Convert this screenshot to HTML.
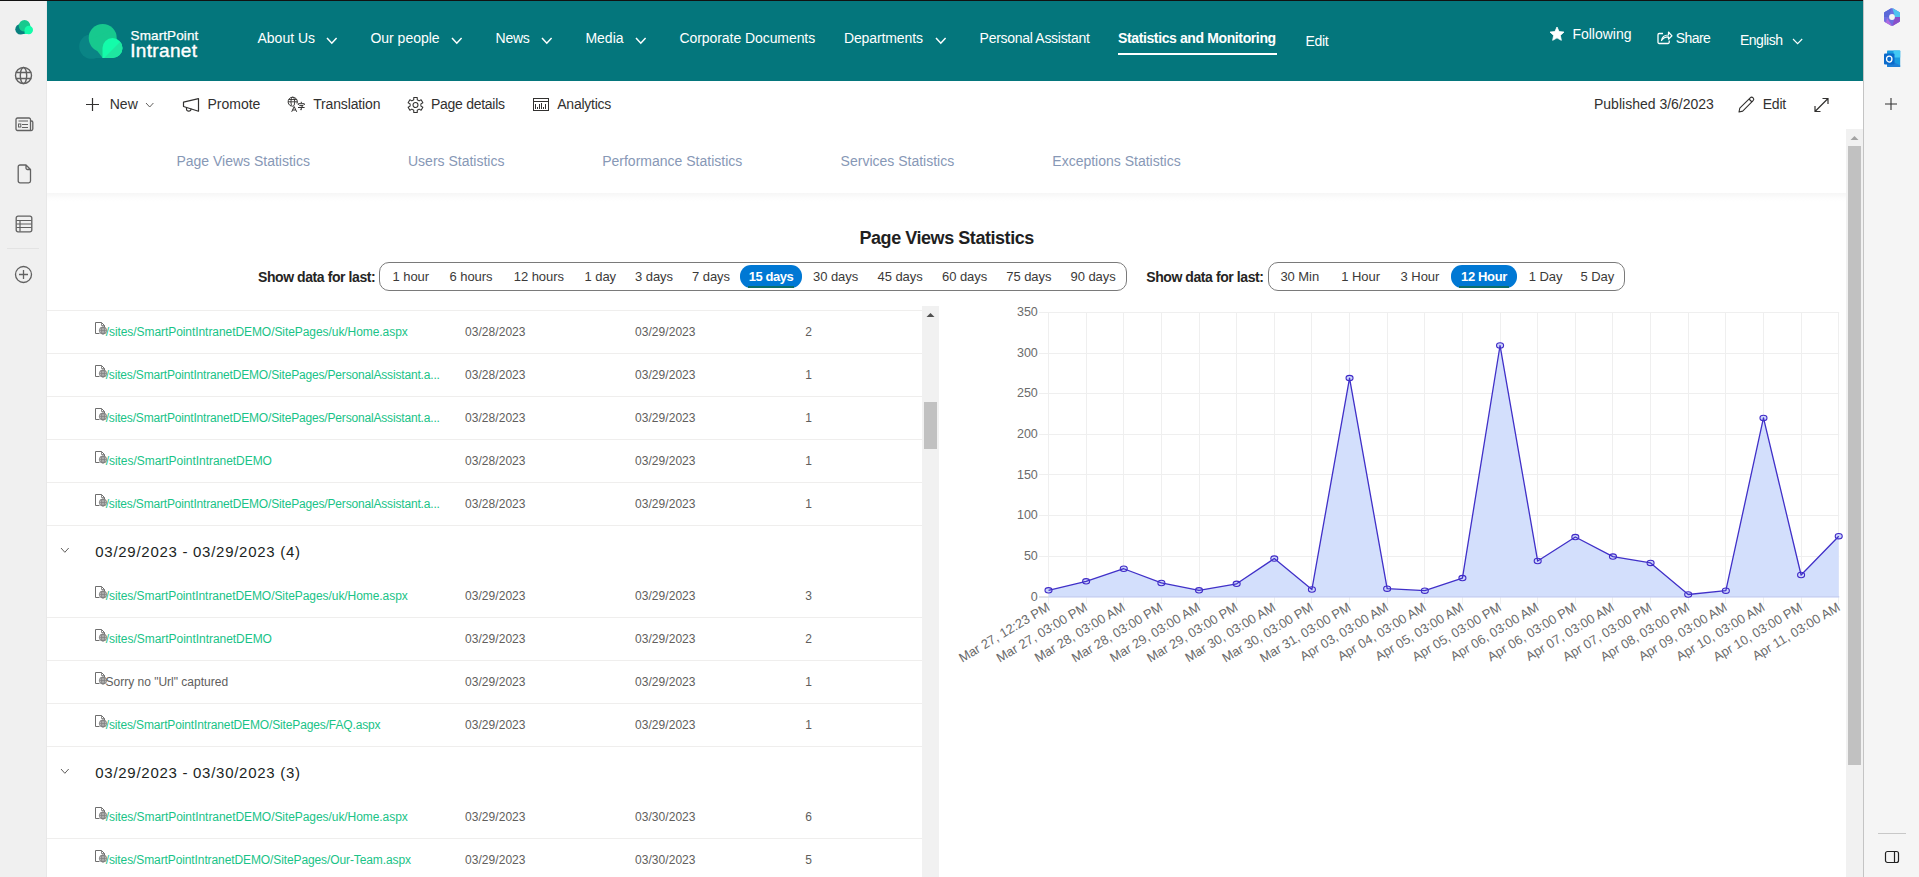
<!DOCTYPE html>
<html><head><meta charset="utf-8"><style>
*{box-sizing:border-box}
html,body{margin:0;padding:0}
body{width:1919px;height:877px;overflow:hidden;position:relative;background:#fff;font-family:"Liberation Sans",sans-serif;color:#323130}
.abs{position:absolute}
.t{position:absolute;white-space:nowrap;line-height:1}
.ic{position:absolute;overflow:visible}
</style></head><body>
<div class="abs" style="left:0;top:0;width:1863px;height:1px;background:#111"></div>
<div class="abs" style="left:0;top:1px;width:47px;height:876px;background:#f0f0f0;border-right:1px solid #e8e8e8"></div>
<div class="abs" style="left:1863px;top:0;width:56px;height:877px;background:#f5f5f5;border-left:1px solid #c4c4c4"></div>
<div class="abs" style="left:47px;top:1px;width:1816px;height:80px;background:#04767c"></div>
<div class="abs" style="left:47px;top:193px;width:1799px;height:9px;background:linear-gradient(#f6f6f6,#fdfdfd 60%,#fff)"></div>
<svg class="ic" style="left:75px;top:20px" width="52" height="42" viewBox="75 20 52 42">
<defs><clipPath id="lc2"><circle cx="112.5" cy="48" r="10"/><rect x="102.5" y="48" width="10" height="10"/></clipPath></defs>
<circle cx="91.5" cy="46.5" r="12.3" fill="#0a8485"/>
<rect x="91" y="40" width="20" height="18" fill="#0a8485"/>
<circle cx="102.7" cy="38" r="14" fill="#17c98e"/>
<path d="M88.8 40 L102.7 58 L112 58 L112 30 Z" fill="#17c98e"/>
<g clip-path="url(#lc2)"><rect x="100" y="36" width="25" height="24" fill="#14fcaa"/>
<path d="M124 38 L103 59 L124 59 Z" fill="#1ee6a0"/></g>
</svg>
<div class="t" style="left:130.60px;top:29.47px;font-size:13.5px;color:#fff;letter-spacing:0.1px;-webkit-text-stroke:0.25px #fff;">SmartPoint</div>
<div class="t" style="left:130.20px;top:40.92px;font-size:19px;color:#fff;letter-spacing:0.35px;-webkit-text-stroke:0.4px #fff;">Intranet</div>
<div class="t" style="left:257.50px;top:31.15px;font-size:14px;color:#fff;">About Us</div>
<div class="t" style="left:370.40px;top:31.15px;font-size:14px;color:#fff;">Our people</div>
<div class="t" style="left:495.60px;top:31.15px;font-size:14px;color:#fff;letter-spacing:-0.3px;">News</div>
<div class="t" style="left:585.40px;top:31.15px;font-size:14px;color:#fff;">Media</div>
<div class="t" style="left:679.50px;top:31.15px;font-size:14px;color:#fff;letter-spacing:-0.07px;">Corporate Documents</div>
<div class="t" style="left:843.90px;top:31.15px;font-size:14px;color:#fff;letter-spacing:-0.1px;">Departments</div>
<div class="t" style="left:979.60px;top:31.15px;font-size:14px;color:#fff;letter-spacing:-0.29px;">Personal Assistant</div>
<div class="t" style="left:1118.00px;top:31.15px;font-size:14px;color:#fff;font-weight:bold;letter-spacing:-0.38px;">Statistics and Monitoring</div>
<div class="abs" style="left:1118px;top:53px;width:159px;height:2px;background:#fff"></div>
<div class="t" style="left:1305.60px;top:33.75px;font-size:14px;color:#fff;letter-spacing:-0.4px;">Edit</div>
<svg class="ic" style="left:324.60px;top:35.50px" width="13.60" height="9.20"><polyline points="2,2 6.80,7.20 11.60,2" fill="none" stroke="#fff" stroke-width="1.5"/></svg>
<svg class="ic" style="left:450.00px;top:35.50px" width="13.60" height="9.20"><polyline points="2,2 6.80,7.20 11.60,2" fill="none" stroke="#fff" stroke-width="1.5"/></svg>
<svg class="ic" style="left:539.50px;top:35.50px" width="13.60" height="9.20"><polyline points="2,2 6.80,7.20 11.60,2" fill="none" stroke="#fff" stroke-width="1.5"/></svg>
<svg class="ic" style="left:633.60px;top:35.50px" width="13.60" height="9.20"><polyline points="2,2 6.80,7.20 11.60,2" fill="none" stroke="#fff" stroke-width="1.5"/></svg>
<svg class="ic" style="left:933.50px;top:35.50px" width="13.60" height="9.20"><polyline points="2,2 6.80,7.20 11.60,2" fill="none" stroke="#fff" stroke-width="1.5"/></svg>
<svg class="ic" style="left:1549px;top:26px" width="16" height="16" viewBox="0 0 24 24"><path d="M12 1.5 L15.1 8.3 L22.5 9.1 L17 14.1 L18.5 21.5 L12 17.8 L5.5 21.5 L7 14.1 L1.5 9.1 L8.9 8.3 Z" fill="#fff" stroke="#fff" stroke-width="1.2" stroke-linejoin="round"/></svg>
<div class="t" style="left:1572.40px;top:27.15px;font-size:14px;color:#fff;">Following</div>
<svg class="ic" style="left:1657px;top:30px" width="16" height="15" viewBox="0 0 16 15"><path d="M6 3.5 H2.2 a1.2 1.2 0 0 0 -1.2 1.2 V12.3 a1.2 1.2 0 0 0 1.2 1.2 H11 a1.2 1.2 0 0 0 1.2-1.2 V10.5" fill="none" stroke="#fff" stroke-width="1.3"/><path d="M4.5 10.5 C5 6.5 8 5 11.5 5 V2 L15 5.8 L11.5 9.2 V6.8 C8.5 6.8 6 8 4.5 10.5Z" fill="none" stroke="#fff" stroke-width="1.2" stroke-linejoin="round"/></svg>
<div class="t" style="left:1675.70px;top:30.75px;font-size:14px;color:#fff;letter-spacing:-0.55px;">Share</div>
<div class="t" style="left:1739.90px;top:32.95px;font-size:14px;color:#fff;letter-spacing:-0.45px;">English</div>
<svg class="ic" style="left:1790.70px;top:36.80px" width="13.20" height="8.70"><polyline points="2,2 6.60,6.70 11.20,2" fill="none" stroke="#fff" stroke-width="1.1"/></svg>
<svg class="ic" style="left:85px;top:97px" width="15" height="15"><path d="M7.5 1 V14 M1 7.5 H14" stroke="#323130" stroke-width="1.2"/></svg>
<div class="t" style="left:109.75px;top:97.15px;font-size:14px;color:#323130;">New</div>
<svg class="ic" style="left:144.20px;top:101.00px" width="11.40" height="8.00"><polyline points="2,2 5.70,6.00 9.40,2" fill="none" stroke="#605e5c" stroke-width="1.0"/></svg>
<svg class="ic" style="left:181px;top:96px" width="20" height="18" viewBox="0 0 20 18"><path d="M2.5 6.1 L17.5 2.6 V15.2 L2.5 10.5 Z" fill="none" stroke="#323130" stroke-width="1.2" stroke-linejoin="round"/><path d="M5.5 11.3 V13 C5.5 15.8 9.8 16 10.2 12.7" fill="none" stroke="#323130" stroke-width="1.2"/></svg>
<div class="t" style="left:207.50px;top:97.15px;font-size:14px;color:#323130;">Promote</div>
<svg class="ic" style="left:287px;top:96px" width="19" height="17" viewBox="0 0 19 17">
<path d="M10 7.5 A4.6 4.6 0 1 0 4.5 10.2" fill="none" stroke="#323130" stroke-width="1"/><ellipse cx="5.8" cy="5.8" rx="1.9" ry="4.6" fill="none" stroke="#323130" stroke-width="0.9"/><path d="M1.2 5.8 H10.4 M1.8 3.5 H9.8" stroke="#323130" stroke-width="0.9" fill="none"/>
<path d="M4.7 15.8 L7.2 10.6 L9.7 15.8 M5.7 14 H8.7" fill="none" stroke="#323130" stroke-width="1"/>
<path d="M14.3 5.8 V7.2 M11.3 9 V7.7 H17.3 V9 M12.3 9.6 H16.2 L14.3 11 V13.8 L13.3 13.6 M11 11.5 H17.6" fill="none" stroke="#323130" stroke-width="1"/></svg>
<div class="t" style="left:313.20px;top:97.15px;font-size:14px;color:#323130;letter-spacing:-0.15px;">Translation</div>
<svg class="ic" style="left:405.5px;top:96px" width="19" height="18" viewBox="0 0 19 18"><path d="M7.75 3.79 L7.75 1.50 L11.25 1.50 L11.25 3.79 L13.14 4.88 L15.12 3.74 L16.87 6.77 L14.89 7.91 L14.89 10.09 L16.87 11.23 L15.12 14.26 L13.14 13.12 L11.25 14.21 L11.25 16.50 L7.75 16.50 L7.75 14.21 L5.86 13.12 L3.88 14.26 L2.13 11.23 L4.11 10.09 L4.11 7.91 L2.13 6.77 L3.88 3.74 L5.86 4.88 Z" fill="none" stroke="#323130" stroke-width="1.05" stroke-linejoin="round"/><circle cx="9.5" cy="9" r="2.5" fill="none" stroke="#323130" stroke-width="1.05"/></svg>
<div class="t" style="left:431.00px;top:97.15px;font-size:14px;color:#323130;letter-spacing:-0.28px;">Page details</div>
<svg class="ic" style="left:533px;top:98px" width="16" height="13" viewBox="0 0 16 13" shape-rendering="crispEdges"><rect x="0.5" y="0.5" width="15" height="12" fill="none" stroke="#323130" stroke-width="1"/><path d="M0.5 3.5 H15.5" stroke="#323130" stroke-width="1"/><path d="M2.5 6 V11 M4.5 9 V11 M6.5 6 V11 M8.5 5 V11 M10.5 8.5 V11 M12.5 6 V11" stroke="#323130" stroke-width="1"/></svg>
<div class="t" style="left:557.30px;top:97.15px;font-size:14px;color:#323130;letter-spacing:-0.26px;">Analytics</div>
<div class="t" style="left:1594.00px;top:97.15px;font-size:14px;color:#323130;">Published 3/6/2023</div>
<svg class="ic" style="left:1737px;top:96px" width="18" height="18" viewBox="0 0 18 18"><path d="M2 16 L2.8 12.2 L13.2 1.8 a1.9 1.9 0 0 1 2.9 2.9 L5.7 15.1 Z M12 3 L15 6" fill="none" stroke="#323130" stroke-width="1.1" stroke-linejoin="round"/></svg>
<div class="t" style="left:1762.70px;top:97.15px;font-size:14px;color:#323130;letter-spacing:-0.2px;">Edit</div>
<svg class="ic" style="left:1813px;top:97px" width="17" height="16" viewBox="0 0 17 16"><path d="M2 14.5 L15 1.5 M9.5 1.5 H15 V7 M2 9 V14.5 H7.5" fill="none" stroke="#323130" stroke-width="1.2"/></svg>
<div class="t" style="left:176.40px;top:154.25px;font-size:14px;color:#8798b6;">Page Views Statistics</div>
<div class="t" style="left:408.00px;top:154.25px;font-size:14px;color:#8798b6;">Users Statistics</div>
<div class="t" style="left:602.20px;top:154.25px;font-size:14px;color:#8798b6;">Performance Statistics</div>
<div class="t" style="left:840.60px;top:154.25px;font-size:14px;color:#8798b6;">Services Statistics</div>
<div class="t" style="left:1052.30px;top:154.25px;font-size:14px;color:#8798b6;">Exceptions Statistics</div>
<svg class="ic" style="left:14px;top:19px" width="20" height="16" viewBox="14 19 20 16">
<circle cx="20.5" cy="29.3" r="5.2" fill="#08807f"/><rect x="20" y="27" width="8" height="7" fill="#08807f"/>
<circle cx="24.5" cy="25.8" r="5.8" fill="#17c98e"/>
<circle cx="28.8" cy="30" r="4.2" fill="#14fcaa"/><rect x="24.6" y="30" width="4.5" height="4" fill="#14fcaa"/>
</svg>
<svg class="ic" style="left:14px;top:66px" width="19" height="19" viewBox="0 0 19 19"><circle cx="9.5" cy="9.5" r="8" fill="none" stroke="#616161" stroke-width="1.4"/><ellipse cx="9.5" cy="9.5" rx="3.2" ry="8" fill="none" stroke="#616161" stroke-width="1.4"/><path d="M1.8 6.5 H17.2 M1.8 12.5 H17.2" stroke="#616161" stroke-width="1.4"/></svg>
<svg class="ic" style="left:15px;top:117px" width="19" height="15" viewBox="0 0 19 15"><path d="M2.5 1 H14 a1.5 1.5 0 0 1 1.5 1.5 V13.5 H2.5 a1.5 1.5 0 0 1 -1.5 -1.5 V2.5 a1.5 1.5 0 0 1 1.5 -1.5Z M15.5 4 H16.5 a1.3 1.3 0 0 1 1.3 1.3 V12 a1.5 1.5 0 0 1 -1.5 1.5 H14" fill="none" stroke="#616161" stroke-width="1.3"/><path d="M3.5 4 H13 M7 7.5 H13 M7 10.5 H13" stroke="#616161" stroke-width="1.2"/><rect x="3.5" y="7" width="2.3" height="3" fill="none" stroke="#616161" stroke-width="1"/></svg>
<svg class="ic" style="left:17px;top:164px" width="15" height="20" viewBox="0 0 15 20"><path d="M3 1 H9 L13.5 5.5 V17 a1.8 1.8 0 0 1 -1.8 1.8 H3 a1.8 1.8 0 0 1 -1.8 -1.8 V2.8 A1.8 1.8 0 0 1 3 1Z M9 1 V4 a1.5 1.5 0 0 0 1.5 1.5 H13.5" fill="none" stroke="#616161" stroke-width="1.3" stroke-linejoin="round"/></svg>
<svg class="ic" style="left:15px;top:215px" width="18" height="18" viewBox="0 0 18 18"><path d="M3 1.2 H15 a1.8 1.8 0 0 1 1.8 1.8 V15 a1.8 1.8 0 0 1 -1.8 1.8 H3 a1.8 1.8 0 0 1 -1.8 -1.8 V3 A1.8 1.8 0 0 1 3 1.2Z" fill="none" stroke="#616161" stroke-width="1.3"/><path d="M1.5 5.5 H16.5 M1.5 9 H16.5 M1.5 12.5 H16.5 M5 5.5 V16.5" stroke="#616161" stroke-width="1.2"/></svg>
<div class="abs" style="left:7px;top:248px;width:32px;height:1px;background:#e3e3e3"></div>
<svg class="ic" style="left:14px;top:265px" width="19" height="19" viewBox="0 0 19 19"><circle cx="9.5" cy="9.5" r="8" fill="none" stroke="#616161" stroke-width="1.3"/><path d="M9.5 5 V14 M5 9.5 H14" stroke="#616161" stroke-width="1.3"/></svg>
<svg class="ic" style="left:1883px;top:7px" width="18" height="20" viewBox="0 0 18 20">
<defs><clipPath id="hx"><path d="M9 1.2 Q9.6 1.1 10.2 1.4 L16.2 4.9 Q17 5.4 17 6.3 V13.7 Q17 14.6 16.2 15.1 L10.2 18.6 Q9 19.2 7.8 18.6 L1.8 15.1 Q1 14.6 1 13.7 V6.3 Q1 5.4 1.8 4.9 L7.8 1.4 Q8.4 1.1 9 1.2Z"/></clipPath></defs>
<g clip-path="url(#hx)">
<rect x="0" y="0" width="18" height="20" fill="#6d6fe0"/>
<path d="M9 0 L18 5 V10 L12 10 Z" fill="#4fc3f0"/>
<path d="M18 10 V20 H9 L12 10Z" fill="#8a4fc9"/>
<path d="M0 13 L9 20 H0Z M4 11 L10 20 H2 Z" fill="#b06be0"/>
<path d="M0 3 L9 0 L6 10 H0Z" fill="#5a68d8"/>
</g>
<circle cx="9" cy="10" r="2.9" fill="#f5f5f5"/></svg>
<svg class="ic" style="left:1884px;top:50px" width="17" height="18" viewBox="0 0 17 18">
<rect x="3" y="0.5" width="13.2" height="16.5" rx="0.8" fill="#1a9be0"/>
<rect x="9.5" y="0.5" width="6.7" height="7" fill="#42c8f4"/>
<path d="M3 8.5 L16.2 15.5 V17 H3.8 a0.8 0.8 0 0 1 -0.8 -0.8Z" fill="#1e7fd6"/>
<rect x="0" y="3.6" width="10.5" height="10.9" rx="1" fill="#0a6acb"/>
<ellipse cx="5.25" cy="9.05" rx="2.7" ry="3" fill="none" stroke="#fff" stroke-width="1.3"/></svg>
<svg class="ic" style="left:1884px;top:97px" width="14" height="14"><path d="M7 1 V13 M1 7 H13" stroke="#333" stroke-width="1.1"/></svg>
<div class="abs" style="left:1878px;top:833px;width:28px;height:1px;background:#c8c8c8"></div>
<svg class="ic" style="left:1884px;top:850px" width="16" height="14" viewBox="0 0 16 14"><rect x="1.5" y="1.5" width="13" height="11" rx="2" fill="none" stroke="#222" stroke-width="1.2"/><path d="M10.5 1.5 V12.5" stroke="#222" stroke-width="1.2"/></svg>
<div class="abs" style="left:1846px;top:129px;width:17px;height:748px;background:#f1f1f1"></div>
<svg class="ic" style="left:1850px;top:135px" width="9" height="6"><path d="M0.5 5 L4.5 1 L8.5 5Z" fill="#a3a3a3"/></svg>
<div class="abs" style="left:1848px;top:146px;width:13px;height:619px;background:#c1c1c1"></div>
<div class="t" style="left:859.50px;top:228.51px;font-size:18px;color:#1f1f1f;font-weight:bold;letter-spacing:-0.45px;">Page Views Statistics</div>
<div class="t" style="left:258.00px;top:270.35px;font-size:14px;color:#252423;font-weight:bold;letter-spacing:-0.42px;">Show data for last:</div>
<div class="t" style="left:1146.25px;top:270.35px;font-size:14px;color:#252423;font-weight:bold;letter-spacing:-0.42px;">Show data for last:</div>
<div class="abs" style="left:379px;top:262px;width:747.5px;height:29px;border:1px solid #7a7a7a;border-radius:10px"></div>
<div class="abs" style="left:740px;top:265px;width:61.5px;height:23px;background:#0078d4;border-radius:11px"></div>
<div class="abs" style="left:747.5px;top:286px;width:46px;height:1.6px;background:#0c6f6a"></div>
<div class="t" style="left:392.50px;top:270.00px;font-size:13px;color:#3b3a39;letter-spacing:-0.05px;">1 hour</div>
<div class="t" style="left:449.50px;top:270.00px;font-size:13px;color:#3b3a39;letter-spacing:-0.05px;">6 hours</div>
<div class="t" style="left:513.75px;top:270.00px;font-size:13px;color:#3b3a39;letter-spacing:-0.05px;">12 hours</div>
<div class="t" style="left:584.50px;top:270.00px;font-size:13px;color:#3b3a39;letter-spacing:-0.05px;">1 day</div>
<div class="t" style="left:635.00px;top:270.00px;font-size:13px;color:#3b3a39;letter-spacing:-0.05px;">3 days</div>
<div class="t" style="left:692.00px;top:270.00px;font-size:13px;color:#3b3a39;letter-spacing:-0.05px;">7 days</div>
<div class="t" style="left:813.00px;top:270.00px;font-size:13px;color:#3b3a39;letter-spacing:-0.05px;">30 days</div>
<div class="t" style="left:877.50px;top:270.00px;font-size:13px;color:#3b3a39;letter-spacing:-0.05px;">45 days</div>
<div class="t" style="left:942.00px;top:270.00px;font-size:13px;color:#3b3a39;letter-spacing:-0.05px;">60 days</div>
<div class="t" style="left:1006.25px;top:270.00px;font-size:13px;color:#3b3a39;letter-spacing:-0.05px;">75 days</div>
<div class="t" style="left:1070.50px;top:270.00px;font-size:13px;color:#3b3a39;letter-spacing:-0.05px;">90 days</div>
<div class="t" style="left:748.75px;top:270.00px;font-size:13px;color:#fff;font-weight:bold;letter-spacing:-0.45px;">15 days</div>
<div class="abs" style="left:1268px;top:262px;width:357px;height:29px;border:1px solid #7a7a7a;border-radius:10px"></div>
<div class="abs" style="left:1451.25px;top:265px;width:65.5px;height:23px;background:#0078d4;border-radius:11px"></div>
<div class="abs" style="left:1459px;top:286px;width:50px;height:1.6px;background:#0c6f6a"></div>
<div class="t" style="left:1280.40px;top:270.00px;font-size:13px;color:#3b3a39;letter-spacing:-0.05px;">30 Min</div>
<div class="t" style="left:1341.25px;top:270.00px;font-size:13px;color:#3b3a39;letter-spacing:-0.05px;">1 Hour</div>
<div class="t" style="left:1400.60px;top:270.00px;font-size:13px;color:#3b3a39;letter-spacing:-0.05px;">3 Hour</div>
<div class="t" style="left:1528.75px;top:270.00px;font-size:13px;color:#3b3a39;letter-spacing:-0.05px;">1 Day</div>
<div class="t" style="left:1580.40px;top:270.00px;font-size:13px;color:#3b3a39;letter-spacing:-0.05px;">5 Day</div>
<div class="t" style="left:1461.00px;top:270.00px;font-size:13px;color:#fff;font-weight:bold;letter-spacing:-0.35px;">12 Hour</div>
<div class="abs" style="left:47px;top:310px;width:875px;height:1px;background:#efeeed"></div>
<div class="abs" style="left:47px;top:353px;width:875px;height:1px;background:#efeeed"></div>
<div class="abs" style="left:47px;top:396px;width:875px;height:1px;background:#efeeed"></div>
<div class="abs" style="left:47px;top:439px;width:875px;height:1px;background:#efeeed"></div>
<div class="abs" style="left:47px;top:482px;width:875px;height:1px;background:#efeeed"></div>
<div class="abs" style="left:47px;top:525px;width:875px;height:1px;background:#efeeed"></div>
<div class="abs" style="left:47px;top:617px;width:875px;height:1px;background:#efeeed"></div>
<div class="abs" style="left:47px;top:660px;width:875px;height:1px;background:#efeeed"></div>
<div class="abs" style="left:47px;top:703px;width:875px;height:1px;background:#efeeed"></div>
<div class="abs" style="left:47px;top:746px;width:875px;height:1px;background:#efeeed"></div>
<div class="abs" style="left:47px;top:838px;width:875px;height:1px;background:#efeeed"></div>
<svg class="ic" style="left:95px;top:322px" width="13" height="13" viewBox="0 0 13 13"><path d="M4.5 11.5 H0.5 V0.5 H6.5 L9.5 3.5 V5" fill="none" stroke="#6e6e6e" stroke-width="1"/><path d="M6.5 0.5 V3.5 H9.5" fill="none" stroke="#6e6e6e" stroke-width="0.8"/><circle cx="8" cy="8.5" r="3.6" fill="#fff" stroke="#6e6e6e" stroke-width="0.9"/><path d="M4.6 8.5 H11.4 M4.9 7 H11.1 M4.9 10 H11.1 M8 5 V12" stroke="#6e6e6e" stroke-width="0.7"/><ellipse cx="8" cy="8.5" rx="1.7" ry="3.6" fill="none" stroke="#6e6e6e" stroke-width="0.7"/></svg>
<div class="t" style="left:105.70px;top:325.84px;font-size:12px;color:#19c387;letter-spacing:-0.067px;">/sites/SmartPointIntranetDEMO/SitePages/uk/Home.aspx</div>
<div class="t" style="left:465.00px;top:325.84px;font-size:12px;color:#605e5c;letter-spacing:0.05px;">03/28/2023</div>
<div class="t" style="left:635.00px;top:325.84px;font-size:12px;color:#605e5c;letter-spacing:0.05px;">03/29/2023</div>
<div class="t" style="left:805.20px;top:325.84px;font-size:12px;color:#605e5c;">2</div>
<svg class="ic" style="left:95px;top:365px" width="13" height="13" viewBox="0 0 13 13"><path d="M4.5 11.5 H0.5 V0.5 H6.5 L9.5 3.5 V5" fill="none" stroke="#6e6e6e" stroke-width="1"/><path d="M6.5 0.5 V3.5 H9.5" fill="none" stroke="#6e6e6e" stroke-width="0.8"/><circle cx="8" cy="8.5" r="3.6" fill="#fff" stroke="#6e6e6e" stroke-width="0.9"/><path d="M4.6 8.5 H11.4 M4.9 7 H11.1 M4.9 10 H11.1 M8 5 V12" stroke="#6e6e6e" stroke-width="0.7"/><ellipse cx="8" cy="8.5" rx="1.7" ry="3.6" fill="none" stroke="#6e6e6e" stroke-width="0.7"/></svg>
<div class="t" style="left:105.70px;top:368.84px;font-size:12px;color:#19c387;letter-spacing:-0.174px;">/sites/SmartPointIntranetDEMO/SitePages/PersonalAssistant.a...</div>
<div class="t" style="left:465.00px;top:368.84px;font-size:12px;color:#605e5c;letter-spacing:0.05px;">03/28/2023</div>
<div class="t" style="left:635.00px;top:368.84px;font-size:12px;color:#605e5c;letter-spacing:0.05px;">03/29/2023</div>
<div class="t" style="left:805.20px;top:368.84px;font-size:12px;color:#605e5c;">1</div>
<svg class="ic" style="left:95px;top:408px" width="13" height="13" viewBox="0 0 13 13"><path d="M4.5 11.5 H0.5 V0.5 H6.5 L9.5 3.5 V5" fill="none" stroke="#6e6e6e" stroke-width="1"/><path d="M6.5 0.5 V3.5 H9.5" fill="none" stroke="#6e6e6e" stroke-width="0.8"/><circle cx="8" cy="8.5" r="3.6" fill="#fff" stroke="#6e6e6e" stroke-width="0.9"/><path d="M4.6 8.5 H11.4 M4.9 7 H11.1 M4.9 10 H11.1 M8 5 V12" stroke="#6e6e6e" stroke-width="0.7"/><ellipse cx="8" cy="8.5" rx="1.7" ry="3.6" fill="none" stroke="#6e6e6e" stroke-width="0.7"/></svg>
<div class="t" style="left:105.70px;top:411.84px;font-size:12px;color:#19c387;letter-spacing:-0.174px;">/sites/SmartPointIntranetDEMO/SitePages/PersonalAssistant.a...</div>
<div class="t" style="left:465.00px;top:411.84px;font-size:12px;color:#605e5c;letter-spacing:0.05px;">03/28/2023</div>
<div class="t" style="left:635.00px;top:411.84px;font-size:12px;color:#605e5c;letter-spacing:0.05px;">03/29/2023</div>
<div class="t" style="left:805.20px;top:411.84px;font-size:12px;color:#605e5c;">1</div>
<svg class="ic" style="left:95px;top:451px" width="13" height="13" viewBox="0 0 13 13"><path d="M4.5 11.5 H0.5 V0.5 H6.5 L9.5 3.5 V5" fill="none" stroke="#6e6e6e" stroke-width="1"/><path d="M6.5 0.5 V3.5 H9.5" fill="none" stroke="#6e6e6e" stroke-width="0.8"/><circle cx="8" cy="8.5" r="3.6" fill="#fff" stroke="#6e6e6e" stroke-width="0.9"/><path d="M4.6 8.5 H11.4 M4.9 7 H11.1 M4.9 10 H11.1 M8 5 V12" stroke="#6e6e6e" stroke-width="0.7"/><ellipse cx="8" cy="8.5" rx="1.7" ry="3.6" fill="none" stroke="#6e6e6e" stroke-width="0.7"/></svg>
<div class="t" style="left:105.70px;top:454.84px;font-size:12px;color:#19c387;letter-spacing:-0.04px;">/sites/SmartPointIntranetDEMO</div>
<div class="t" style="left:465.00px;top:454.84px;font-size:12px;color:#605e5c;letter-spacing:0.05px;">03/28/2023</div>
<div class="t" style="left:635.00px;top:454.84px;font-size:12px;color:#605e5c;letter-spacing:0.05px;">03/29/2023</div>
<div class="t" style="left:805.20px;top:454.84px;font-size:12px;color:#605e5c;">1</div>
<svg class="ic" style="left:95px;top:494px" width="13" height="13" viewBox="0 0 13 13"><path d="M4.5 11.5 H0.5 V0.5 H6.5 L9.5 3.5 V5" fill="none" stroke="#6e6e6e" stroke-width="1"/><path d="M6.5 0.5 V3.5 H9.5" fill="none" stroke="#6e6e6e" stroke-width="0.8"/><circle cx="8" cy="8.5" r="3.6" fill="#fff" stroke="#6e6e6e" stroke-width="0.9"/><path d="M4.6 8.5 H11.4 M4.9 7 H11.1 M4.9 10 H11.1 M8 5 V12" stroke="#6e6e6e" stroke-width="0.7"/><ellipse cx="8" cy="8.5" rx="1.7" ry="3.6" fill="none" stroke="#6e6e6e" stroke-width="0.7"/></svg>
<div class="t" style="left:105.70px;top:497.84px;font-size:12px;color:#19c387;letter-spacing:-0.174px;">/sites/SmartPointIntranetDEMO/SitePages/PersonalAssistant.a...</div>
<div class="t" style="left:465.00px;top:497.84px;font-size:12px;color:#605e5c;letter-spacing:0.05px;">03/28/2023</div>
<div class="t" style="left:635.00px;top:497.84px;font-size:12px;color:#605e5c;letter-spacing:0.05px;">03/29/2023</div>
<div class="t" style="left:805.20px;top:497.84px;font-size:12px;color:#605e5c;">1</div>
<svg class="ic" style="left:95px;top:586px" width="13" height="13" viewBox="0 0 13 13"><path d="M4.5 11.5 H0.5 V0.5 H6.5 L9.5 3.5 V5" fill="none" stroke="#6e6e6e" stroke-width="1"/><path d="M6.5 0.5 V3.5 H9.5" fill="none" stroke="#6e6e6e" stroke-width="0.8"/><circle cx="8" cy="8.5" r="3.6" fill="#fff" stroke="#6e6e6e" stroke-width="0.9"/><path d="M4.6 8.5 H11.4 M4.9 7 H11.1 M4.9 10 H11.1 M8 5 V12" stroke="#6e6e6e" stroke-width="0.7"/><ellipse cx="8" cy="8.5" rx="1.7" ry="3.6" fill="none" stroke="#6e6e6e" stroke-width="0.7"/></svg>
<div class="t" style="left:105.70px;top:589.84px;font-size:12px;color:#19c387;letter-spacing:-0.067px;">/sites/SmartPointIntranetDEMO/SitePages/uk/Home.aspx</div>
<div class="t" style="left:465.00px;top:589.84px;font-size:12px;color:#605e5c;letter-spacing:0.05px;">03/29/2023</div>
<div class="t" style="left:635.00px;top:589.84px;font-size:12px;color:#605e5c;letter-spacing:0.05px;">03/29/2023</div>
<div class="t" style="left:805.20px;top:589.84px;font-size:12px;color:#605e5c;">3</div>
<svg class="ic" style="left:95px;top:629px" width="13" height="13" viewBox="0 0 13 13"><path d="M4.5 11.5 H0.5 V0.5 H6.5 L9.5 3.5 V5" fill="none" stroke="#6e6e6e" stroke-width="1"/><path d="M6.5 0.5 V3.5 H9.5" fill="none" stroke="#6e6e6e" stroke-width="0.8"/><circle cx="8" cy="8.5" r="3.6" fill="#fff" stroke="#6e6e6e" stroke-width="0.9"/><path d="M4.6 8.5 H11.4 M4.9 7 H11.1 M4.9 10 H11.1 M8 5 V12" stroke="#6e6e6e" stroke-width="0.7"/><ellipse cx="8" cy="8.5" rx="1.7" ry="3.6" fill="none" stroke="#6e6e6e" stroke-width="0.7"/></svg>
<div class="t" style="left:105.70px;top:632.84px;font-size:12px;color:#19c387;letter-spacing:-0.04px;">/sites/SmartPointIntranetDEMO</div>
<div class="t" style="left:465.00px;top:632.84px;font-size:12px;color:#605e5c;letter-spacing:0.05px;">03/29/2023</div>
<div class="t" style="left:635.00px;top:632.84px;font-size:12px;color:#605e5c;letter-spacing:0.05px;">03/29/2023</div>
<div class="t" style="left:805.20px;top:632.84px;font-size:12px;color:#605e5c;">2</div>
<svg class="ic" style="left:95px;top:672px" width="13" height="13" viewBox="0 0 13 13"><path d="M4.5 11.5 H0.5 V0.5 H6.5 L9.5 3.5 V5" fill="none" stroke="#6e6e6e" stroke-width="1"/><path d="M6.5 0.5 V3.5 H9.5" fill="none" stroke="#6e6e6e" stroke-width="0.8"/><circle cx="8" cy="8.5" r="3.6" fill="#fff" stroke="#6e6e6e" stroke-width="0.9"/><path d="M4.6 8.5 H11.4 M4.9 7 H11.1 M4.9 10 H11.1 M8 5 V12" stroke="#6e6e6e" stroke-width="0.7"/><ellipse cx="8" cy="8.5" rx="1.7" ry="3.6" fill="none" stroke="#6e6e6e" stroke-width="0.7"/></svg>
<div class="t" style="left:105.50px;top:675.84px;font-size:12px;color:#605e5c;letter-spacing:0px;">Sorry no &quot;Url&quot; captured</div>
<div class="t" style="left:465.00px;top:675.84px;font-size:12px;color:#605e5c;letter-spacing:0.05px;">03/29/2023</div>
<div class="t" style="left:635.00px;top:675.84px;font-size:12px;color:#605e5c;letter-spacing:0.05px;">03/29/2023</div>
<div class="t" style="left:805.20px;top:675.84px;font-size:12px;color:#605e5c;">1</div>
<svg class="ic" style="left:95px;top:715px" width="13" height="13" viewBox="0 0 13 13"><path d="M4.5 11.5 H0.5 V0.5 H6.5 L9.5 3.5 V5" fill="none" stroke="#6e6e6e" stroke-width="1"/><path d="M6.5 0.5 V3.5 H9.5" fill="none" stroke="#6e6e6e" stroke-width="0.8"/><circle cx="8" cy="8.5" r="3.6" fill="#fff" stroke="#6e6e6e" stroke-width="0.9"/><path d="M4.6 8.5 H11.4 M4.9 7 H11.1 M4.9 10 H11.1 M8 5 V12" stroke="#6e6e6e" stroke-width="0.7"/><ellipse cx="8" cy="8.5" rx="1.7" ry="3.6" fill="none" stroke="#6e6e6e" stroke-width="0.7"/></svg>
<div class="t" style="left:105.70px;top:718.84px;font-size:12px;color:#19c387;letter-spacing:-0.14px;">/sites/SmartPointIntranetDEMO/SitePages/FAQ.aspx</div>
<div class="t" style="left:465.00px;top:718.84px;font-size:12px;color:#605e5c;letter-spacing:0.05px;">03/29/2023</div>
<div class="t" style="left:635.00px;top:718.84px;font-size:12px;color:#605e5c;letter-spacing:0.05px;">03/29/2023</div>
<div class="t" style="left:805.20px;top:718.84px;font-size:12px;color:#605e5c;">1</div>
<svg class="ic" style="left:95px;top:807px" width="13" height="13" viewBox="0 0 13 13"><path d="M4.5 11.5 H0.5 V0.5 H6.5 L9.5 3.5 V5" fill="none" stroke="#6e6e6e" stroke-width="1"/><path d="M6.5 0.5 V3.5 H9.5" fill="none" stroke="#6e6e6e" stroke-width="0.8"/><circle cx="8" cy="8.5" r="3.6" fill="#fff" stroke="#6e6e6e" stroke-width="0.9"/><path d="M4.6 8.5 H11.4 M4.9 7 H11.1 M4.9 10 H11.1 M8 5 V12" stroke="#6e6e6e" stroke-width="0.7"/><ellipse cx="8" cy="8.5" rx="1.7" ry="3.6" fill="none" stroke="#6e6e6e" stroke-width="0.7"/></svg>
<div class="t" style="left:105.70px;top:810.84px;font-size:12px;color:#19c387;letter-spacing:-0.067px;">/sites/SmartPointIntranetDEMO/SitePages/uk/Home.aspx</div>
<div class="t" style="left:465.00px;top:810.84px;font-size:12px;color:#605e5c;letter-spacing:0.05px;">03/29/2023</div>
<div class="t" style="left:635.00px;top:810.84px;font-size:12px;color:#605e5c;letter-spacing:0.05px;">03/30/2023</div>
<div class="t" style="left:805.20px;top:810.84px;font-size:12px;color:#605e5c;">6</div>
<svg class="ic" style="left:95px;top:850px" width="13" height="13" viewBox="0 0 13 13"><path d="M4.5 11.5 H0.5 V0.5 H6.5 L9.5 3.5 V5" fill="none" stroke="#6e6e6e" stroke-width="1"/><path d="M6.5 0.5 V3.5 H9.5" fill="none" stroke="#6e6e6e" stroke-width="0.8"/><circle cx="8" cy="8.5" r="3.6" fill="#fff" stroke="#6e6e6e" stroke-width="0.9"/><path d="M4.6 8.5 H11.4 M4.9 7 H11.1 M4.9 10 H11.1 M8 5 V12" stroke="#6e6e6e" stroke-width="0.7"/><ellipse cx="8" cy="8.5" rx="1.7" ry="3.6" fill="none" stroke="#6e6e6e" stroke-width="0.7"/></svg>
<div class="t" style="left:105.70px;top:853.84px;font-size:12px;color:#19c387;letter-spacing:-0.106px;">/sites/SmartPointIntranetDEMO/SitePages/Our-Team.aspx</div>
<div class="t" style="left:465.00px;top:853.84px;font-size:12px;color:#605e5c;letter-spacing:0.05px;">03/29/2023</div>
<div class="t" style="left:635.00px;top:853.84px;font-size:12px;color:#605e5c;letter-spacing:0.05px;">03/30/2023</div>
<div class="t" style="left:805.20px;top:853.84px;font-size:12px;color:#605e5c;">5</div>
<div class="t" style="left:95.30px;top:544.10px;font-size:15px;color:#201f1e;letter-spacing:0.72px;">03/29/2023 - 03/29/2023 (4)</div>
<svg class="ic" style="left:59.30px;top:546.30px" width="11.70" height="8.30"><polyline points="2,2 5.85,6.30 9.70,2" fill="none" stroke="#605e5c" stroke-width="1.0"/></svg>
<div class="t" style="left:95.30px;top:765.10px;font-size:15px;color:#201f1e;letter-spacing:0.72px;">03/29/2023 - 03/30/2023 (3)</div>
<svg class="ic" style="left:59.30px;top:767.30px" width="11.70" height="8.30"><polyline points="2,2 5.85,6.30 9.70,2" fill="none" stroke="#605e5c" stroke-width="1.0"/></svg>
<div class="abs" style="left:922px;top:306px;width:17px;height:571px;background:#f1f1f1"></div>
<svg class="ic" style="left:926px;top:312px" width="9" height="6"><path d="M0.5 5 L4.5 1 L8.5 5Z" fill="#505050"/></svg>
<div class="abs" style="left:924px;top:402px;width:13px;height:47px;background:#c1c1c1"></div>
<svg class="ic" style="left:940px;top:300px" width="920" height="400" viewBox="940 300 920 400">
<rect x="1039" y="556" width="800.23" height="1" fill="#efefef"/>
<rect x="1039" y="515" width="800.23" height="1" fill="#efefef"/>
<rect x="1039" y="474" width="800.23" height="1" fill="#efefef"/>
<rect x="1039" y="434" width="800.23" height="1" fill="#efefef"/>
<rect x="1039" y="393" width="800.23" height="1" fill="#efefef"/>
<rect x="1039" y="353" width="800.23" height="1" fill="#efefef"/>
<rect x="1039" y="312" width="800.23" height="1" fill="#efefef"/>
<rect x="1048" y="312" width="1" height="292" fill="#efefef"/>
<rect x="1086" y="312" width="1" height="292" fill="#efefef"/>
<rect x="1123" y="312" width="1" height="292" fill="#efefef"/>
<rect x="1161" y="312" width="1" height="292" fill="#efefef"/>
<rect x="1199" y="312" width="1" height="292" fill="#efefef"/>
<rect x="1236" y="312" width="1" height="292" fill="#efefef"/>
<rect x="1274" y="312" width="1" height="292" fill="#efefef"/>
<rect x="1311" y="312" width="1" height="292" fill="#efefef"/>
<rect x="1349" y="312" width="1" height="292" fill="#efefef"/>
<rect x="1387" y="312" width="1" height="292" fill="#efefef"/>
<rect x="1424" y="312" width="1" height="292" fill="#efefef"/>
<rect x="1462" y="312" width="1" height="292" fill="#efefef"/>
<rect x="1500" y="312" width="1" height="292" fill="#efefef"/>
<rect x="1537" y="312" width="1" height="292" fill="#efefef"/>
<rect x="1575" y="312" width="1" height="292" fill="#efefef"/>
<rect x="1612" y="312" width="1" height="292" fill="#efefef"/>
<rect x="1650" y="312" width="1" height="292" fill="#efefef"/>
<rect x="1688" y="312" width="1" height="292" fill="#efefef"/>
<rect x="1725" y="312" width="1" height="292" fill="#efefef"/>
<rect x="1763" y="312" width="1" height="292" fill="#efefef"/>
<rect x="1801" y="312" width="1" height="292" fill="#efefef"/>
<rect x="1838" y="312" width="1" height="292" fill="#efefef"/>
<polygon points="1048.50,596.80 1048.50,590.29 1086.13,581.35 1123.76,568.74 1161.39,582.98 1199.02,590.29 1236.65,583.79 1274.28,558.58 1311.91,589.48 1349.54,378.05 1387.17,588.67 1424.80,590.70 1462.43,578.10 1500.06,345.52 1537.69,561.02 1575.32,537.03 1612.95,556.55 1650.58,562.97 1688.21,594.52 1725.84,590.70 1763.47,417.90 1801.10,575.01 1838.73,536.22 1838.73,596.80" fill="#d3dffc"/>
<rect x="1039" y="596" width="800.23" height="1.6" fill="#c9d2f3"/>
<rect x="1039" y="596" width="9.5" height="1.6" fill="#e2e2e2"/>
<ellipse cx="1048.50" cy="590.29" rx="3.5" ry="2.7" fill="#cdd6fb" stroke="#3e28c6" stroke-width="1.1"/>
<ellipse cx="1086.13" cy="581.35" rx="3.5" ry="2.7" fill="#cdd6fb" stroke="#3e28c6" stroke-width="1.1"/>
<ellipse cx="1123.76" cy="568.74" rx="3.5" ry="2.7" fill="#cdd6fb" stroke="#3e28c6" stroke-width="1.1"/>
<ellipse cx="1161.39" cy="582.98" rx="3.5" ry="2.7" fill="#cdd6fb" stroke="#3e28c6" stroke-width="1.1"/>
<ellipse cx="1199.02" cy="590.29" rx="3.5" ry="2.7" fill="#cdd6fb" stroke="#3e28c6" stroke-width="1.1"/>
<ellipse cx="1236.65" cy="583.79" rx="3.5" ry="2.7" fill="#cdd6fb" stroke="#3e28c6" stroke-width="1.1"/>
<ellipse cx="1274.28" cy="558.58" rx="3.5" ry="2.7" fill="#cdd6fb" stroke="#3e28c6" stroke-width="1.1"/>
<ellipse cx="1311.91" cy="589.48" rx="3.5" ry="2.7" fill="#cdd6fb" stroke="#3e28c6" stroke-width="1.1"/>
<ellipse cx="1349.54" cy="378.05" rx="3.5" ry="2.7" fill="#cdd6fb" stroke="#3e28c6" stroke-width="1.1"/>
<ellipse cx="1387.17" cy="588.67" rx="3.5" ry="2.7" fill="#cdd6fb" stroke="#3e28c6" stroke-width="1.1"/>
<ellipse cx="1424.80" cy="590.70" rx="3.5" ry="2.7" fill="#cdd6fb" stroke="#3e28c6" stroke-width="1.1"/>
<ellipse cx="1462.43" cy="578.10" rx="3.5" ry="2.7" fill="#cdd6fb" stroke="#3e28c6" stroke-width="1.1"/>
<ellipse cx="1500.06" cy="345.52" rx="3.5" ry="2.7" fill="#cdd6fb" stroke="#3e28c6" stroke-width="1.1"/>
<ellipse cx="1537.69" cy="561.02" rx="3.5" ry="2.7" fill="#cdd6fb" stroke="#3e28c6" stroke-width="1.1"/>
<ellipse cx="1575.32" cy="537.03" rx="3.5" ry="2.7" fill="#cdd6fb" stroke="#3e28c6" stroke-width="1.1"/>
<ellipse cx="1612.95" cy="556.55" rx="3.5" ry="2.7" fill="#cdd6fb" stroke="#3e28c6" stroke-width="1.1"/>
<ellipse cx="1650.58" cy="562.97" rx="3.5" ry="2.7" fill="#cdd6fb" stroke="#3e28c6" stroke-width="1.1"/>
<ellipse cx="1688.21" cy="594.52" rx="3.5" ry="2.7" fill="#cdd6fb" stroke="#3e28c6" stroke-width="1.1"/>
<ellipse cx="1725.84" cy="590.70" rx="3.5" ry="2.7" fill="#cdd6fb" stroke="#3e28c6" stroke-width="1.1"/>
<ellipse cx="1763.47" cy="417.90" rx="3.5" ry="2.7" fill="#cdd6fb" stroke="#3e28c6" stroke-width="1.1"/>
<ellipse cx="1801.10" cy="575.01" rx="3.5" ry="2.7" fill="#cdd6fb" stroke="#3e28c6" stroke-width="1.1"/>
<ellipse cx="1838.73" cy="536.22" rx="3.5" ry="2.7" fill="#cdd6fb" stroke="#3e28c6" stroke-width="1.1"/>
<polyline points="1048.50,590.29 1086.13,581.35 1123.76,568.74 1161.39,582.98 1199.02,590.29 1236.65,583.79 1274.28,558.58 1311.91,589.48 1349.54,378.05 1387.17,588.67 1424.80,590.70 1462.43,578.10 1500.06,345.52 1537.69,561.02 1575.32,537.03 1612.95,556.55 1650.58,562.97 1688.21,594.52 1725.84,590.70 1763.47,417.90 1801.10,575.01 1838.73,536.22" fill="none" stroke="#4030c8" stroke-width="1.3" stroke-linejoin="round"/>
<text x="1037.8" y="600.60" text-anchor="end" font-size="12.5" fill="#6b6b6b" font-family="Liberation Sans">0</text>
<text x="1037.8" y="559.94" text-anchor="end" font-size="12.5" fill="#6b6b6b" font-family="Liberation Sans">50</text>
<text x="1037.8" y="519.28" text-anchor="end" font-size="12.5" fill="#6b6b6b" font-family="Liberation Sans">100</text>
<text x="1037.8" y="478.62" text-anchor="end" font-size="12.5" fill="#6b6b6b" font-family="Liberation Sans">150</text>
<text x="1037.8" y="437.96" text-anchor="end" font-size="12.5" fill="#6b6b6b" font-family="Liberation Sans">200</text>
<text x="1037.8" y="397.30" text-anchor="end" font-size="12.5" fill="#6b6b6b" font-family="Liberation Sans">250</text>
<text x="1037.8" y="356.64" text-anchor="end" font-size="12.5" fill="#6b6b6b" font-family="Liberation Sans">300</text>
<text x="1037.8" y="315.98" text-anchor="end" font-size="12.5" fill="#6b6b6b" font-family="Liberation Sans">350</text>
<text x="0" y="0" transform="translate(1050.70,609.60) rotate(-31)" text-anchor="end" font-size="13" fill="#6b6b6b" font-family="Liberation Sans">Mar 27, 12:23 PM</text>
<text x="0" y="0" transform="translate(1088.33,609.60) rotate(-31)" text-anchor="end" font-size="13" fill="#6b6b6b" font-family="Liberation Sans">Mar 27, 03:00 PM</text>
<text x="0" y="0" transform="translate(1125.96,609.60) rotate(-31)" text-anchor="end" font-size="13" fill="#6b6b6b" font-family="Liberation Sans">Mar 28, 03:00 AM</text>
<text x="0" y="0" transform="translate(1163.59,609.60) rotate(-31)" text-anchor="end" font-size="13" fill="#6b6b6b" font-family="Liberation Sans">Mar 28, 03:00 PM</text>
<text x="0" y="0" transform="translate(1201.22,609.60) rotate(-31)" text-anchor="end" font-size="13" fill="#6b6b6b" font-family="Liberation Sans">Mar 29, 03:00 AM</text>
<text x="0" y="0" transform="translate(1238.85,609.60) rotate(-31)" text-anchor="end" font-size="13" fill="#6b6b6b" font-family="Liberation Sans">Mar 29, 03:00 PM</text>
<text x="0" y="0" transform="translate(1276.48,609.60) rotate(-31)" text-anchor="end" font-size="13" fill="#6b6b6b" font-family="Liberation Sans">Mar 30, 03:00 AM</text>
<text x="0" y="0" transform="translate(1314.11,609.60) rotate(-31)" text-anchor="end" font-size="13" fill="#6b6b6b" font-family="Liberation Sans">Mar 30, 03:00 PM</text>
<text x="0" y="0" transform="translate(1351.74,609.60) rotate(-31)" text-anchor="end" font-size="13" fill="#6b6b6b" font-family="Liberation Sans">Mar 31, 03:00 PM</text>
<text x="0" y="0" transform="translate(1389.37,609.60) rotate(-31)" text-anchor="end" font-size="13" fill="#6b6b6b" font-family="Liberation Sans">Apr 03, 03:00 AM</text>
<text x="0" y="0" transform="translate(1427.00,609.60) rotate(-31)" text-anchor="end" font-size="13" fill="#6b6b6b" font-family="Liberation Sans">Apr 04, 03:00 AM</text>
<text x="0" y="0" transform="translate(1464.63,609.60) rotate(-31)" text-anchor="end" font-size="13" fill="#6b6b6b" font-family="Liberation Sans">Apr 05, 03:00 AM</text>
<text x="0" y="0" transform="translate(1502.26,609.60) rotate(-31)" text-anchor="end" font-size="13" fill="#6b6b6b" font-family="Liberation Sans">Apr 05, 03:00 PM</text>
<text x="0" y="0" transform="translate(1539.89,609.60) rotate(-31)" text-anchor="end" font-size="13" fill="#6b6b6b" font-family="Liberation Sans">Apr 06, 03:00 AM</text>
<text x="0" y="0" transform="translate(1577.52,609.60) rotate(-31)" text-anchor="end" font-size="13" fill="#6b6b6b" font-family="Liberation Sans">Apr 06, 03:00 PM</text>
<text x="0" y="0" transform="translate(1615.15,609.60) rotate(-31)" text-anchor="end" font-size="13" fill="#6b6b6b" font-family="Liberation Sans">Apr 07, 03:00 AM</text>
<text x="0" y="0" transform="translate(1652.78,609.60) rotate(-31)" text-anchor="end" font-size="13" fill="#6b6b6b" font-family="Liberation Sans">Apr 07, 03:00 PM</text>
<text x="0" y="0" transform="translate(1690.41,609.60) rotate(-31)" text-anchor="end" font-size="13" fill="#6b6b6b" font-family="Liberation Sans">Apr 08, 03:00 PM</text>
<text x="0" y="0" transform="translate(1728.04,609.60) rotate(-31)" text-anchor="end" font-size="13" fill="#6b6b6b" font-family="Liberation Sans">Apr 09, 03:00 AM</text>
<text x="0" y="0" transform="translate(1765.67,609.60) rotate(-31)" text-anchor="end" font-size="13" fill="#6b6b6b" font-family="Liberation Sans">Apr 10, 03:00 AM</text>
<text x="0" y="0" transform="translate(1803.30,609.60) rotate(-31)" text-anchor="end" font-size="13" fill="#6b6b6b" font-family="Liberation Sans">Apr 10, 03:00 PM</text>
<text x="0" y="0" transform="translate(1840.93,609.60) rotate(-31)" text-anchor="end" font-size="13" fill="#6b6b6b" font-family="Liberation Sans">Apr 11, 03:00 AM</text>
</svg>
</body></html>
